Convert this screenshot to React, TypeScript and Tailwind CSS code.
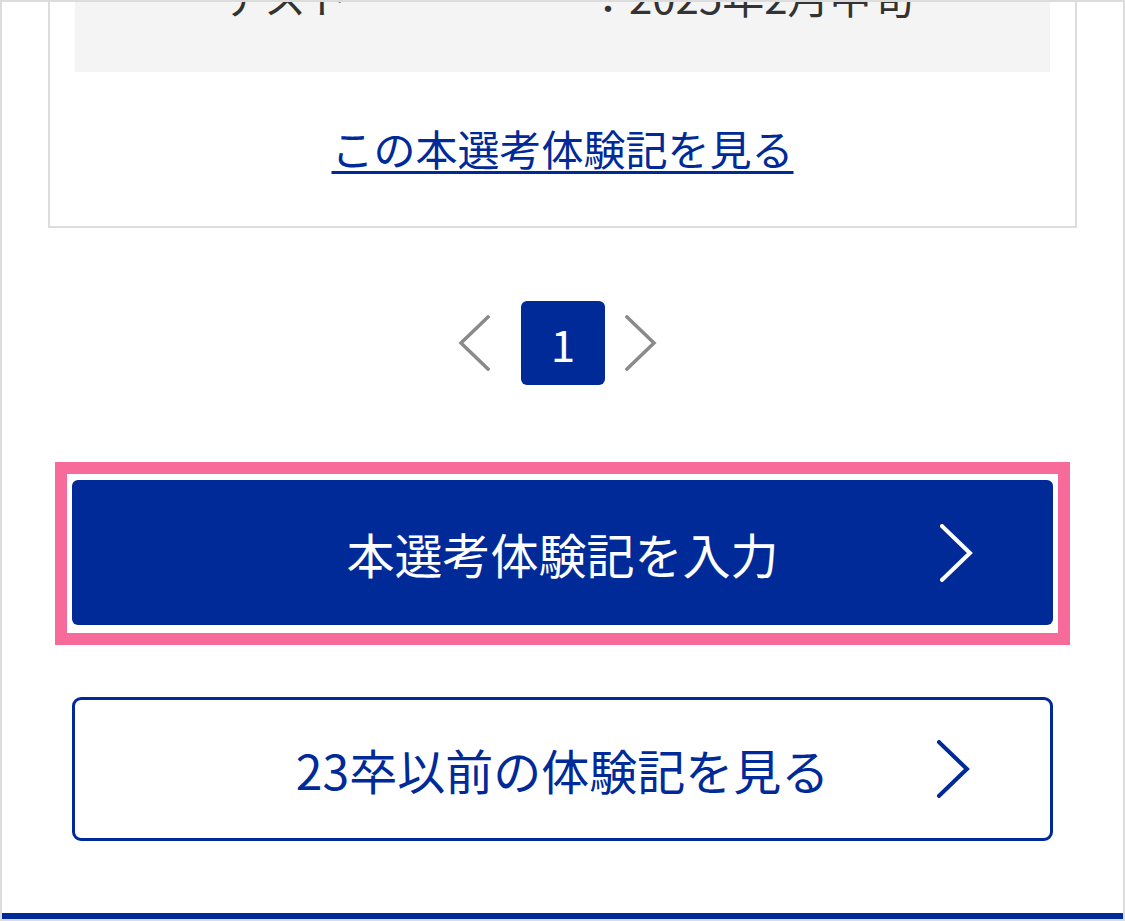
import React from "react"

const BLUE = "#002a98"

function Chevron({
  dir,
  className,
  stroke = 3.5,
}: {
  dir: "left" | "right"
  className?: string
  stroke?: number
}) {
  return (
    <svg
      width="32"
      height="56"
      viewBox="0 0 32 56"
      fill="none"
      stroke="currentColor"
      strokeWidth={stroke}
      strokeLinecap="square"
      className={className}
      aria-hidden
    >
      {dir === "left" ? <path d="M30 2 L3 28 L30 54" /> : <path d="M2 2 L29 28 L2 54" />}
    </svg>
  )
}

export default function App() {
  return (
    <div
      className="box-border flex h-[921px] w-[1125px] flex-col overflow-hidden border-2 border-[#dcdcdc] bg-white"
      style={{ fontFamily: '"Noto Sans CJK JP", "Noto Sans", sans-serif' }}
    >
      {/* Experience card (scrolled, top cut off) */}
      <div className="mx-[46px] mt-[-38px] border-x-2 border-b-2 border-[#dddddd] px-[25px] pb-[47px]">
        <div className="bg-[#f4f4f4] pb-[45px] pl-[147px]">
          <div className="flex text-[42px] leading-[63px] text-[#333333]">
            <span className="w-[365px]">テスト</span>
            <span>：2025年2月中旬</span>
          </div>
        </div>
        <div className="mt-[44px] text-center text-[42px] leading-[63px]">
          <a
            href="#"
            className="underline decoration-[3px] underline-offset-[5px]"
            style={{ color: BLUE }}
          >
            この本選考体験記を見る
          </a>
        </div>
      </div>

      {/* Pagination */}
      <div className="mt-[73px] flex items-center justify-center pr-[10px]">
        <Chevron dir="left" className="mr-[31px] text-[#8a8a8a]" />
        <div className="flex h-[84px] w-[84px] items-center justify-center rounded-[6px] bg-[#002a98] text-[44px] leading-none text-white">
          1
        </div>
        <Chevron dir="right" className="ml-[20px] text-[#8a8a8a]" />
      </div>

      {/* Highlighted primary button */}
      <div className="mx-[53px] mt-[77px] border-[12px] border-[#f76b9b] px-[5px] pb-[8px] pt-[6px]">
        <button className="relative flex h-[145px] w-full items-center justify-center rounded-[6px] bg-[#002a98] text-[48px] text-white">
          本選考体験記を入力
          <Chevron
            dir="right"
            stroke={4}
            className="absolute right-[80px] top-1/2 h-[58px] w-[33px] -translate-y-1/2 text-white"
          />
        </button>
      </div>

      {/* Secondary button */}
      <div className="mx-[70px] mt-[52px]">
        <button className="relative flex h-[144px] w-full items-center justify-center rounded-[9px] border-[3px] border-[#002a98] bg-white text-[48px] text-[#002a98]">
          23卒以前の体験記を見る
          <Chevron
            dir="right"
            stroke={4}
            className="absolute right-[80px] top-1/2 h-[58px] w-[33px] -translate-y-1/2 text-[#002a98]"
          />
        </button>
      </div>

      <div className="mt-[72px] h-[6px] w-full shrink-0 bg-[#002a98]" />
    </div>
  )
}
